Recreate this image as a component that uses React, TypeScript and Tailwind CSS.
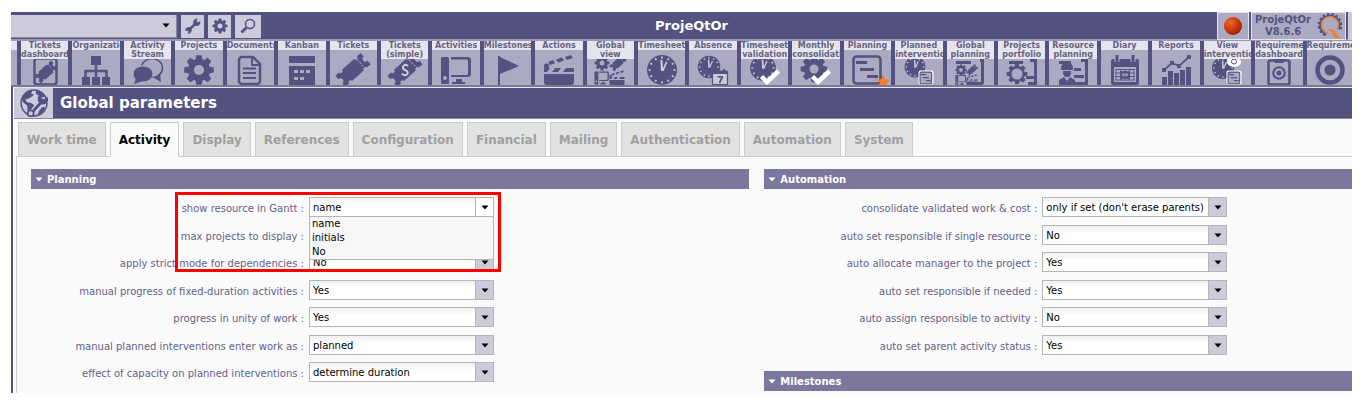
import React, { useState } from "react";

type IconProps = { children: React.ReactNode };

const Svg: React.FC<IconProps> = ({ children }) => (
  <svg viewBox="0 0 32 32" className="h-8 w-8 overflow-visible" fill="currentColor" aria-hidden="true">
    {children}
  </svg>
);

const Gear = ({ x = 16, y = 16, s = 1, hole = "#abaac2" }) => (
  <g transform={`translate(${x} ${y}) scale(${s})`}>
    {[0, 45, 90, 135].map((a) => (
      <path key={a} transform={`rotate(${a})`} d="M-3.6 -10L-2.6 -14.8H2.6L3.6 -10V10L2.6 14.8H-2.6L-3.6 10Z" />
    ))}
    <circle r="11" />
    <circle r="5" fill={hole} />
  </g>
);

const Clock = ({ x = 16, y = 16, s = 1 }) => (
  <g transform={`translate(${x} ${y}) scale(${s})`}>
    <circle r="15" />
    {[0, 30, 60, 90, 120, 150, 180, 210, 240, 270, 300, 330].map((a) => (
      <rect key={a} x="-0.8" y="-13.5" width="1.6" height="2.2" fill="#cdcadb" transform={`rotate(${a})`} />
    ))}
    <path d="M-1 1L-1.6 -10H0.4L1 -2L4 -8.5L5.4 -7.8L1.6 1Z" fill="#cdcadb" />
  </g>
);

const Ticket = ({ x = 16, y = 16, s = 1 }) => (
  <g transform={`translate(${x} ${y}) rotate(-42) scale(${s})`}>
    <path d="M-17 -7.5H-12A2 2 0 0 0 -8 -7.5H8A2 2 0 0 0 12 -7.5H17V-3A3 3 0 0 0 17 3V7.5H12A2 2 0 0 0 8 7.5H-8A2 2 0 0 0 -12 7.5H-17V3A3 3 0 0 0 -17 -3Z" />
    <path d="M10 -5V5" stroke="#abaac2" strokeWidth="1" strokeDasharray="2 1.5" />
  </g>
);

const Computer = ({ x = 0, y = 0, s = 1 }) => (
  <g transform={`translate(${x} ${y}) scale(${s})`}>
    <rect x="1" y="3" width="8" height="27" rx="1.5" />
    <circle cx="5" cy="24" r="2" fill="#abaac2" />
    <path d="M11 3H28A3 3 0 0 1 31 6V20A3 3 0 0 1 28 23H11V21H26.5A1.5 1.5 0 0 0 28 19.5V7A1.5 1.5 0 0 0 26.5 5.5H11Z" />
    <path d="M16 25H22V28H25V30H12V28H16Z" />
  </g>
);

const Clap = ({ x = 0, y = 0, s = 1 }) => (
  <g transform={`translate(${x} ${y}) scale(${s})`}>
    <path d="M1 20H31V28A3 3 0 0 1 28 31H4A3 3 0 0 1 1 28Z" />
    <path d="M1 14H7L4 18H1ZM12 14H18L15 18H9ZM23 14H31V18H20Z" />
    <circle cx="3.5" cy="12" r="2.6" />
    <path d="M5 8L10 6L12 9L7 11ZM13 5.500L19 3.5L21 6.5L15 8.500ZM22 3L28 1L30 4L24 6Z" />
  </g>
);

const PlanningFrame = ({ x = 0, y = 0, s = 1, bg = "none" }) => (
  <g transform={`translate(${x} ${y}) scale(${s})`}>
    <rect x="2.5" y="2.5" width="27" height="27" rx="3" fill={bg} stroke="currentColor" strokeWidth="2.6" />
    <path d="M5 7H16V10H5ZM9 14H23V17H9ZM16 21H27V24H16Z" />
  </g>
);

const Check = () => <path d="M12.5 22.5L18 28L29.5 17" fill="none" stroke="#fff" strokeWidth="4.5" />;

const Target = ({ x = 16, y = 16, s = 1 }) => (
  <g transform={`translate(${x} ${y}) scale(${s})`}>
    <circle r="12.5" fill="none" stroke="currentColor" strokeWidth="4.5" />
    <circle r="5.5" />
  </g>
);

const menu: { label: string[]; icon: React.ReactNode }[] = [
  {
    label: ["Tickets", "dashboard"],
    icon: (
      <>
        <rect x="5.5" y="4.5" width="22" height="26" rx="2.5" fill="none" stroke="currentColor" strokeWidth="2.4" />
        <Ticket x={17} y={18} s={0.68} />
      </>
    ),
  },
  {
    label: ["Organization"],
    icon: (
      <>
        <path d="M11 2H21V11H11ZM2 23H10V31H2ZM12 23H20V31H12ZM22 23H30V31H22Z" />
        <path d="M16 10V24M5.500 24V17H26.500V24" fill="none" stroke="currentColor" strokeWidth="2.5" />
      </>
    ),
  },
  {
    label: ["Activity", "Stream"],
    icon: (
      <>
        <ellipse cx="20" cy="14" rx="10.5" ry="9.5" fill="none" stroke="currentColor" strokeWidth="1.5" />
        <path d="M22 24L29 28L28 19Z" />
        <ellipse cx="11" cy="20" rx="10" ry="8" stroke="#abaac2" />
        <path d="M4 24L2 30L11 27Z" />
      </>
    ),
  },
  { label: ["Projects"], icon: <Gear /> },
  {
    label: ["Documents"],
    icon: (
      <>
        <path
          d="M8 3H19L26 10V27A3 3 0 0 1 23 30H8A3 3 0 0 1 5 27V6A3 3 0 0 1 8 3Z"
          fill="none"
          stroke="currentColor"
          strokeWidth="2.5"
        />
        <path d="M18 3V11H26M9 14.5H22M9 19H22M9 24H22" fill="none" stroke="currentColor" strokeWidth="1.8" />
      </>
    ),
  },
  {
    label: ["Kanban"],
    icon: (
      <>
        <path d="M3 2H29V9H3ZM3 12H29V31H3Z" />
        <path d="M8 16H12V19H8ZM14 16H18V19H14ZM20 16H24V19H20ZM8 23H12V26H8ZM14 23H18V26H14Z" fill="#abaac2" />
      </>
    ),
  },
  { label: ["Tickets"], icon: <Ticket /> },
  {
    label: ["Tickets", "(simple)"],
    icon: (
      <>
        <Ticket />
        <path
          d="M19 12C16 9 12 13 15 15.5C18 17 20 18 18 20.5C16 22 14 21 13 19.5"
          fill="none"
          stroke="#cdcadb"
          strokeWidth="2"
        />
      </>
    ),
  },
  { label: ["Activities"], icon: <Computer /> },
  { label: ["Milestones"], icon: <path d="M6 2H8V3L27 12L8 20V31H6Z" /> },
  { label: ["Actions"], icon: <Clap /> },
  {
    label: ["Global", "view"],
    icon: (
      <>
        <Gear x={8} y={9} s={0.5} />
        <Ticket x={24} y={9} s={0.5} />
        <Computer x={0} y={16} s={0.48} />
        <Clap x={15} y={16} s={0.5} />
      </>
    ),
  },
  { label: ["Timesheet"], icon: <Clock /> },
  {
    label: ["Absence"],
    icon: (
      <>
        <Clock x={12} y={13} s={0.75} />
        <rect x="15.5" y="17" width="15" height="13.5" rx="1" fill="#cdcadb" stroke="currentColor" strokeWidth="1.2" />
        <path d="M16 17H30V20H16ZM18 15H20V18H18ZM26 15H28V18H26ZM20.5 22H26V23.5L23.5 29H21.5L24 23.5H20.5Z" />
      </>
    ),
  },
  {
    label: ["Timesheet", "validation"],
    icon: (
      <>
        <Clock x={14} y={14} s={0.86} />
        <Check />
      </>
    ),
  },
  {
    label: ["Monthly", "consolidation"],
    icon: (
      <>
        <Gear x={14} y={15} s={0.9} />
        <Check />
      </>
    ),
  },
  {
    label: ["Planning"],
    icon: (
      <>
        <PlanningFrame />
        <path
          d="M32 20L34 25L39 25.5L35.5 29L37 34L32 31.5L27 34L29 29L25.5 25.5L30.5 25Z"
          fill="#ee7f2d"
        />
      </>
    ),
  },
  {
    label: ["Planned", "interventions"],
    icon: (
      <>
        <Clock x={12} y={13} s={0.7} />
        <rect x="15.5" y="16.5" width="15" height="14" rx="2" fill="#fff" />
        <PlanningFrame x={16} y={17} s={0.43} bg="#abaac2" />
      </>
    ),
  },
  {
    label: ["Global", "planning"],
    icon: (
      <>
        <path d="M2 7H17V10H2ZM26 5H30V28A3 3 0 0 1 27 31H23V28H27V8H26Z" />
        <Gear x={7} y={16} s={0.38} />
        <Ticket x={18} y={16} s={0.36} />
        <Computer x={1} y={20} s={0.36} />
        <Clap x={12} y={20} s={0.37} />
      </>
    ),
  },
  {
    label: ["Projects", "portfolio"],
    icon: (
      <>
        <path d="M3 7H17V10H3ZM24 5H31V31H22V28H28V8H24ZM20 22H28V25H20Z" />
        <Gear x={11} y={20} s={0.7} />
        <circle cx="11" cy="20" r="5.5" fill="#abaac2" />
      </>
    ),
  },
  {
    label: ["Resource", "planning"],
    icon: (
      <>
        <path d="M2 7H14V10H2ZM24 5H31V31H18V28H28V8H24ZM17 14H24V17H17ZM17 21H27V24H17Z" />
        <path d="M4 14A6 6 0 0 1 16 14V16H4ZM6 17H14V20L12 23H8L6 20ZM2 31V26L7 23L10 27L13 23L18 26V31Z" />
      </>
    ),
  },
  {
    label: ["Diary"],
    icon: (
      <>
        <path d="M4 5H28A2 2 0 0 1 30 7V29A2 2 0 0 1 28 31H4A2 2 0 0 1 2 29V7A2 2 0 0 1 4 5Z" />
        <path d="M5 13H27V28H5Z" fill="#abaac2" />
        <path d="M8 1V8M24 1V8" stroke="#abaac2" strokeWidth="5" />
        <path d="M8 1V8M24 1V8" stroke="currentColor" strokeWidth="3" />
        <path
          d="M6.5 15.5H25.5M6.5 19H25.5M6.5 22.5H25.5M6.5 26H25.5M7 15V26.5M11.5 15V26.5M16 15V26.5M20.5 15V26.5M25 15V26.5"
          stroke="currentColor"
          strokeWidth="0.9"
        />
        <rect x="12.5" y="18" width="7" height="6" fill="none" stroke="currentColor" strokeWidth="1.8" />
      </>
    ),
  },
  {
    label: ["Reports"],
    icon: (
      <>
        <path d="M2 23H7V31H2ZM8 17H13V31H8ZM14 19H19V31H14ZM20 16H25V31H20ZM26 13H31V31H26Z" />
        <path d="M4 16L12 9L19 12L29 3" fill="none" stroke="currentColor" strokeWidth="1.8" />
        <path d="M2 14H6V18H2ZM10 7H14V11H10ZM17 10H21V14H17ZM27 1H31V5H27Z" />
      </>
    ),
  },
  {
    label: ["View", "interventions"],
    icon: (
      <>
        <Clock x={12} y={14} s={0.74} />
        <ellipse cx="23" cy="8" rx="7" ry="5" fill="#fff" />
        <circle cx="23" cy="7.5" r="2.5" fill="none" stroke="currentColor" strokeWidth="1" />
        <rect x="15.5" y="16.5" width="15" height="14" rx="2" fill="#fff" />
        <PlanningFrame x={16} y={17} s={0.43} bg="#abaac2" />
      </>
    ),
  },
  {
    label: ["Requirements", "dashboard"],
    icon: (
      <>
        <rect x="5.5" y="6.5" width="21" height="24" rx="2" fill="none" stroke="currentColor" strokeWidth="2.6" />
        <path d="M10 5H22L20 9H12Z" />
        <Target x={16} y={19} s={0.46} />
      </>
    ),
  },
  { label: ["Requirements"], icon: <Target /> },
];

const MenuTile = ({ label, icon }: { label: string[]; icon: React.ReactNode }) => (
  <button
    type="button"
    className="relative h-11 min-w-0 flex-1 overflow-hidden bg-[#abaac2] text-[#545281]"
  >
    <span className="absolute inset-x-0 top-[13px] flex justify-center">
      <Svg>{icon}</Svg>
    </span>
    <span className="absolute inset-x-0 top-0 flex flex-col items-center bg-[#e6e5ee] text-[8px] leading-[9px] font-bold text-[#656382]">
      {label.map((line) => (
        <span key={line} className="max-w-full overflow-hidden whitespace-nowrap">
          {line}
        </span>
      ))}
    </span>
  </button>
);

const tabs = [
  "Work time",
  "Activity",
  "Display",
  "References",
  "Configuration",
  "Financial",
  "Mailing",
  "Authentication",
  "Automation",
  "System",
];

type Param = { id: string; label: string; options: string[]; open?: boolean };

const planning: Param[] = [
  { id: "ganttResource", label: "show resource in Gantt", options: ["name", "initials", "No"], open: true },
  { id: "maxProjects", label: "max projects to display", options: [] },
  { id: "strictMode", label: "apply strict mode for dependencies", options: ["No", "Yes"] },
  { id: "fixedDuration", label: "manual progress of fixed-duration activities", options: ["Yes", "No"] },
  { id: "unityProgress", label: "progress in unity of work", options: ["Yes", "No"] },
  { id: "manualWork", label: "manual planned interventions enter work as", options: ["planned"] },
  { id: "capacityEffect", label: "effect of capacity on planned interventions", options: ["determine duration"] },
];

const automation: Param[] = [
  { id: "consolidate", label: "consolidate validated work & cost", options: ["only if set (don't erase parents)"] },
  { id: "singleResource", label: "auto set responsible if single resource", options: ["No", "Yes"] },
  { id: "allocateManager", label: "auto allocate manager to the project", options: ["Yes", "No"] },
  { id: "responsibleNeeded", label: "auto set responsible if needed", options: ["Yes", "No"] },
  { id: "assignResponsible", label: "auto assign responsible to activity", options: ["No", "Yes"] },
  { id: "parentStatus", label: "auto set parent activity status", options: ["Yes", "No"] },
];

const Caret = () => (
  <svg viewBox="0 0 8 5" className="h-[5px] w-2" fill="currentColor" aria-hidden="true">
    <path d="M0.5 0.5H7.5L4 4.5Z" />
  </svg>
);

const ParamRow = ({ param }: { param: Param }) => {
  const [value, setValue] = useState(param.options[0]);

  return (
    <div className="flex items-start gap-[5px] odd:h-7 even:h-[27px]">
      <label
        htmlFor={param.id}
        className="w-[273px] shrink-0 pt-1 text-right leading-4 whitespace-nowrap text-[#656287]"
      >
        {param.label} :
      </label>
      <div className="relative flex h-5 w-[185px] border border-[#b5b5b5] bg-white text-black">
        {param.options.length > 0 ? (
          <select
            id={param.id}
            value={value}
            onChange={(e) => setValue(e.target.value)}
            className="min-w-0 flex-1 appearance-none bg-linear-to-b from-[#f0f0f0] to-white to-40% pt-px pl-[3px] outline-none"
          >
            {param.options.map((option) => (
              <option key={option}>{option}</option>
            ))}
          </select>
        ) : (
          <input id={param.id} type="text" className="min-w-0 flex-1 pl-[3px]" />
        )}
        <span
          className={`pointer-events-none flex w-[18px] shrink-0 items-center justify-center border-l border-[#b5b5b5] ${
            param.open ? "bg-white" : "bg-[#cdcadb]"
          }`}
        >
          <Caret />
        </span>
        {param.open && (
          <ul className="absolute -inset-x-px top-[18px] z-10 border border-[#b5b5b5] bg-[#f7f7f7] pl-0.5 leading-[14px]">
            {param.options.map((option) => (
              <li key={option} onClick={() => setValue(option)}>
                {option}
              </li>
            ))}
          </ul>
        )}
      </div>
    </div>
  );
};

const SectionTitle = ({ title }: { title: string }) => (
  <h2 className="flex h-5 items-center gap-1 bg-[#7c779c] pl-1 text-[10px] font-bold text-white">
    <Caret />
    {title}
  </h2>
);

const App: React.FC = () => {
  const [activeTab, setActiveTab] = useState("Activity");

  return (
    <div className="bg-white pt-3 pr-3 pl-[11px] font-['Verdana','DejaVu_Sans',sans-serif] text-[10px]">
      <div className="overflow-hidden bg-[#545281]">
        <header className="grid h-[27px] grid-cols-[1fr_auto_1fr] items-center">
          <div className="flex items-start gap-1">
            <button
              type="button"
              aria-label="Select project"
              className="flex h-[23px] w-[166px] items-center justify-end border-r border-b border-[#8a88a5] bg-[#cdcadb] pr-1.5 text-black"
            >
              <Caret />
            </button>
            <button
              type="button"
              aria-label="Tools"
              className="flex h-[23px] w-[23px] items-center justify-center bg-[#cdcadb] text-[#545281]"
            >
              <svg viewBox="0 0 16 16" className="h-4 w-4" aria-hidden="true">
                <path d="M3 13L11 5" stroke="currentColor" strokeWidth="2.5" />
                <path
                  d="M15 3A3.500 3.500 0 0 1 9 6.500A3.800 3.800 0 0 1 12.800 0.500L11.500 3L13 4.500ZM0.500 13A3 3 0 0 1 5.500 10A3.200 3.200 0 0 1 2.500 15.500L4 13.500L3 12.500Z"
                  fill="currentColor"
                />
              </svg>
            </button>
            <button
              type="button"
              aria-label="Settings"
              className="flex h-[23px] w-[23px] items-center justify-center bg-[#cdcadb] text-[#545281]"
            >
              <svg viewBox="0 0 32 32" className="h-4 w-4" fill="currentColor" aria-hidden="true">
                <Gear hole="#cdcadb" />
              </svg>
            </button>
            <button
              type="button"
              aria-label="Search"
              className="flex h-[23px] w-[26px] items-center justify-center bg-[#cdcadb] text-[#545281]"
            >
              <svg viewBox="0 0 16 16" className="h-4 w-4" fill="none" stroke="currentColor" aria-hidden="true">
                <circle cx="10" cy="6" r="4.5" strokeWidth="1.5" />
                <path d="M6.5 9.5L1.5 14.5" strokeWidth="2.8" />
              </svg>
            </button>
          </div>
          <h1 className="pl-5 text-[13px] font-bold text-white">ProjeQtOr</h1>
          <div className="flex h-full items-stretch justify-end gap-0.5">
            <button
              type="button"
              aria-label="Record"
              className="flex w-8 items-center justify-center border border-[#e6e5ee] bg-[#abaac2]"
            >
              <svg viewBox="0 0 20 20" className="h-5 w-5" aria-hidden="true">
                <defs>
                  <radialGradient id="dot" cx="0.35" cy="0.3" r="0.8">
                    <stop offset="0" stopColor="#ee6a20" />
                    <stop offset="0.5" stopColor="#d03a0c" />
                    <stop offset="1" stopColor="#8e1d03" />
                  </radialGradient>
                </defs>
                <circle cx="10" cy="10" r="9" fill="url(#dot)" />
              </svg>
            </button>
            <button
              type="button"
              className="flex w-[95px] items-center justify-between border border-[#e6e5ee] bg-[#abaac2] pr-0.5 pl-[3px] text-[#545281]"
            >
              <span className="text-center text-[10px] leading-3 font-bold">
                ProjeQtOr
                <br />
                V8.6.6
              </span>
              <svg viewBox="0 0 28 28" className="h-[26px] w-[26px] shrink-0" fill="none" aria-hidden="true">
                <path
                  d="M9 24A12 12 0 1 1 25 18"
                  stroke="#545281"
                  strokeWidth="2.4"
                  strokeDasharray="2.8 2"
                />
                <path d="M10 23A10.500 10.500 0 1 1 23.500 17.500" stroke="#545281" strokeWidth="1.8" />
                <path d="M11 21.500A9 9 0 1 1 21.500 18" stroke="#ee7f2d" strokeWidth="1.5" />
                <path d="M10.500 17.500C15 16.500 19 18 21 22C22 24.500 24 26.500 27 27.500C22 28 18 27 17 23.500C16 20.500 14 18.500 10.500 17.500Z" fill="#ee7f2d" />
              </svg>
            </button>
            <span className="w-1 bg-[#cdcadb]" />
          </div>
        </header>

        <nav className="-mr-0.5 flex gap-1 border-t-2 border-b-2 border-t-[#9a98b5] border-b-[#7b7991]">
          <span className="w-1.5 shrink-0 border-t-[9px] border-[#e6e5ee] bg-[#abaac2]" />
          {menu.map((item, index) => (
            <MenuTile key={index} label={item.label} icon={item.icon} />
          ))}
        </nav>

        <div className="ml-0.5 border-l border-white">
          <div className="flex h-8 items-stretch gap-[7px] border-t border-b border-t-[#e6e5ee] border-b-[#8a88a5] bg-[#545281]">
            <span className="flex w-[39px] items-center justify-center bg-[#cdcadb] text-[#545281]">
              <svg viewBox="0 0 32 32" className="h-[30px] w-[30px]" fill="none" aria-hidden="true">
                <circle cx="16" cy="16" r="13.8" stroke="currentColor" strokeWidth="1.6" />
                <path
                  d="M4 9C7 5 10 3 14 3L13 6L16 7L14 9L11 11L7 12L8 15L13 16L17 19L14 22L13 27L9 24L9 19L4 15L3 12ZM18 3C23 3 26 6 28 9L24 10L23 13L20 11L21 8L18 6Z"
                  fill="currentColor"
                />
                <path d="M26 12L14 26" stroke="#cdcadb" strokeWidth="6" />
                <path d="M24 15L14 26" stroke="currentColor" strokeWidth="3" />
                <path d="M30 9A5.500 5.500 0 1 1 23.500 7L24 11L27 12Z" fill="currentColor" />
                <circle cx="12.5" cy="27" r="3.2" fill="#cdcadb" stroke="currentColor" strokeWidth="1.8" />
                <path d="M20 29A14 14 0 0 0 28 21L25 20L21 25Z" fill="currentColor" />
              </svg>
            </span>
            <h2 className="self-center text-[15px] font-bold text-white">Global parameters</h2>
          </div>

          <main className="bg-[#fafafa] pt-[3px] pl-0.5">
            <div role="tablist" className="relative z-10 flex gap-1 pl-0.5">
              {tabs.map((tab) => (
                <button
                  key={tab}
                  type="button"
                  role="tab"
                  aria-selected={tab === activeTab}
                  onClick={() => setActiveTab(tab)}
                  className={`h-[35px] border border-[#cccccc] px-2 text-[12px] font-bold ${
                    tab === activeTab
                      ? "border-b-[#fafafa] bg-[#fafafa] text-black"
                      : "bg-[#e2e2e2] text-[#a0a0a0]"
                  }`}
                >
                  {tab}
                </button>
              ))}
            </div>

            <div className="-mt-px grid grid-cols-[55fr_45fr] items-start gap-[15px] border-t border-l border-[#cccccc] pt-3 pb-[2px] pl-[14px]">
              <section className="relative">
                <SectionTitle title="Planning" />
                <div className="pt-2">
                  {planning.map((param) => (
                    <ParamRow key={param.id} param={param} />
                  ))}
                </div>
                <div className="pointer-events-none absolute top-[23px] left-36 z-20 h-20 w-[326px] border-[3px] border-[#ff0000]" />
              </section>
              <div>
                <section className="pb-[9px]">
                  <SectionTitle title="Automation" />
                  <div className="pt-2">
                    {automation.map((param) => (
                      <ParamRow key={param.id} param={param} />
                    ))}
                  </div>
                </section>
                <SectionTitle title="Milestones" />
              </div>
            </div>
          </main>
        </div>
      </div>
    </div>
  );
};

export default App;
